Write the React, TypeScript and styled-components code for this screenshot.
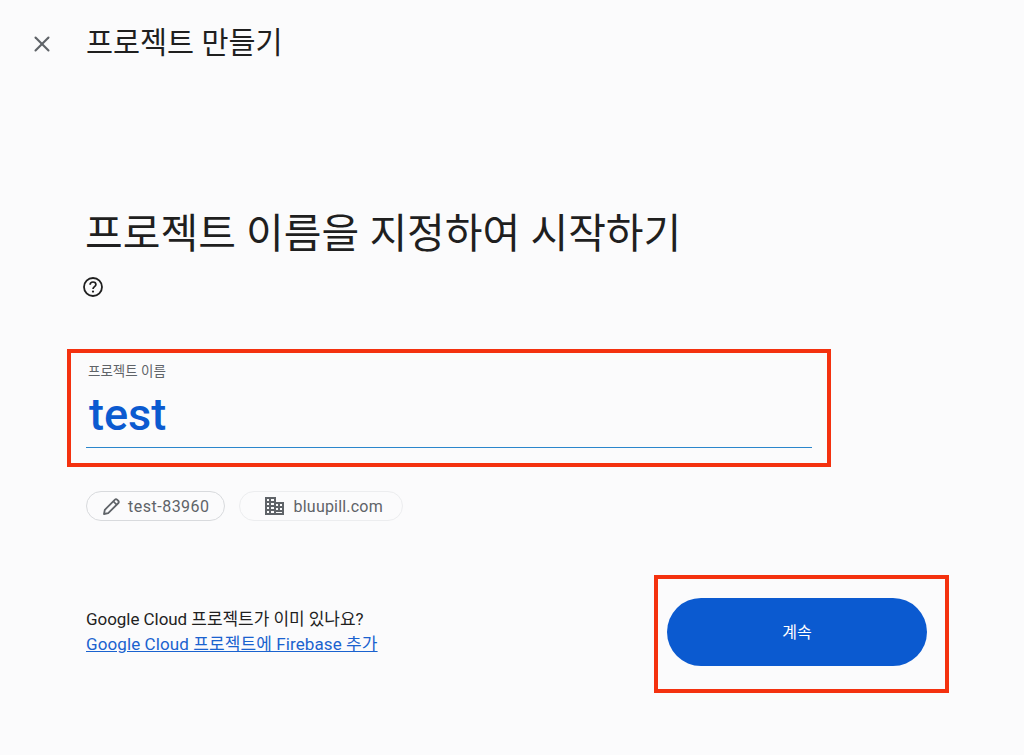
import styled, { createGlobalStyle } from "styled-components";
import { X } from "lucide-react";

const GlobalStyle = createGlobalStyle`
  html, body {
    margin: 0;
    height: 100%;
    background: #fbfbfc;
    font-family: Roboto, "Noto Sans CJK KR", sans-serif;
    color: #1f1f1f;
  }
`;

const QuestionIcon = () => (
  <svg width="22" height="22" viewBox="0 0 22 22" fill="none">
    <circle cx="11" cy="11" r="9" stroke="#1f1f1f" strokeWidth="1.8" />
    <path
      d="M8.1 8.8c0-1.6 1.3-2.8 2.9-2.8s2.9 1.1 2.9 2.6c0 2-2.9 2.2-2.9 4.4"
      stroke="#1f1f1f"
      strokeWidth="1.7"
    />
    <circle cx="11" cy="15.6" r="1.1" fill="#1f1f1f" />
  </svg>
);

const PencilIcon = () => (
  <svg width="19" height="19" viewBox="0 0 19 19" fill="none">
    <path
      d="M2 17l.8-4.2L13 2.6a1.4 1.4 0 0 1 2 0l1.4 1.4a1.4 1.4 0 0 1 0 2L6.2 16.2 2 17z"
      stroke="#5f6368"
      strokeWidth="1.8"
      strokeLinejoin="round"
    />
    <path d="M11.4 4.4l3.2 3.2" stroke="#5f6368" strokeWidth="1.5" />
  </svg>
);

const BuildingIcon = () => (
  <svg width="19" height="18" viewBox="0 0 19 18" fill="#5f6368">
    <path
      fillRule="evenodd"
      d="M0 0h11v5h8v13H0V0zm2 2v2h2V2H2zm4 0v2h3V2H6zM2 6v2h2V6H2zm4 0v2h3V6H6zM2 10v2h2v-2H2zm4 0v2h3v-2H6zM2 14v2h2v-2H2zm4 0v2h3v-2H6zm5-7v2h2V7h-2zm0 4v2h2v-2h-2zm0 4v1h6V7h-2v2h2v2h-2v2h2v2h-6z"
    />
  </svg>
);

export default function App() {
  return (
    <>
      <GlobalStyle />
      <Page>
        <Header>
          <CloseButton aria-label="닫기">
            <X size={34} strokeWidth={1.9} color="#5f6368" />
          </CloseButton>
          <HeaderTitle>프로젝트 만들기</HeaderTitle>
        </Header>
        <Main>
          <Heading>프로젝트 이름을 지정하여 시작하기</Heading>
          <HelpIcon>
            <QuestionIcon />
          </HelpIcon>
          <HighlightField>
            <FieldLabel>프로젝트 이름</FieldLabel>
            <FieldValue>test</FieldValue>
          </HighlightField>
          <Chips>
            <EditChip>
              <PencilIcon />
              test-83960
            </EditChip>
            <OrgChip>
              <BuildingIcon />
              bluupill.com
            </OrgChip>
          </Chips>
          <Footer>
            <ExistingProject>
              <ExistingText>Google Cloud 프로젝트가 이미 있나요?</ExistingText>
              <AddLink href="#">Google Cloud 프로젝트에 Firebase 추가</AddLink>
            </ExistingProject>
            <HighlightAction>
              <ContinueButton>계속</ContinueButton>
            </HighlightAction>
          </Footer>
        </Main>
      </Page>
    </>
  );
}

const Page = styled.div`
  width: 1024px;
  height: 755px;
  overflow: hidden;
`;

const Header = styled.header`
  display: flex;
  align-items: center;
  height: 88px;
  padding-left: 29px;
`;

const CloseButton = styled.button`
  display: flex;
  align-items: center;
  justify-content: center;
  width: 26px;
  height: 26px;
  margin-right: 31px;
  padding: 0;
  border: 0;
  background: none;
`;

const HeaderTitle = styled.h1`
  margin: 0 0 3px;
  font-size: 29.4px;
  font-weight: 400;
  line-height: 36px;
`;

const Main = styled.main`
  padding: 120px 0 0 86px;
`;

const Heading = styled.h2`
  margin: 0 0 0 -1px;
  font-size: 41px;
  font-weight: 400;
  line-height: 52px;
`;

const HelpIcon = styled.div`
  display: flex;
  margin: 16px 0 0 -4px;
`;

const HighlightField = styled.div`
  box-sizing: border-box;
  width: 764px;
  height: 118px;
  margin: 51px 0 0 -19px;
  padding: 10px 15px 15px 15px;
  border: 4px solid #f4310f;
  display: flex;
  flex-direction: column;
`;

const FieldLabel = styled.label`
  padding-left: 2px;
  font-size: 13.5px;
  line-height: 16px;
  color: #5f6368;
`;

const FieldValue = styled.div`
  flex: 1;
  padding: 10px 0 0 3px;
  border-bottom: 1px solid #2b86cc;
  font-size: 45px;
  font-weight: 500;
  line-height: 52px;
  color: #0b5ad0;
`;

const Chips = styled.div`
  display: flex;
  gap: 14px;
  margin-top: 24px;
`;

const Chip = styled.div`
  box-sizing: border-box;
  display: flex;
  align-items: center;
  height: 30px;
  border-radius: 15px;
  font-size: 16px;
  color: #5f6368;
`;

const EditChip = styled(Chip)`
  gap: 7px;
  padding: 0 14px 0 15px;
  border: 1px solid #d8dadd;
  letter-spacing: 0.5px;
`;

const OrgChip = styled(Chip)`
  gap: 10px;
  padding: 0 19px 0 25px;
  border: 1px solid #ecedef;
  letter-spacing: 0.2px;
`;

const Footer = styled.div`
  display: flex;
  justify-content: space-between;
  align-items: center;
  width: 863px;
  margin-top: 54px;
`;

const ExistingProject = styled.div`
  display: flex;
  flex-direction: column;
  margin-bottom: 4px;
`;

const ExistingText = styled.span`
  font-size: 17px;
  line-height: 25px;
  letter-spacing: -0.05px;
`;

const AddLink = styled.a`
  font-size: 17px;
  line-height: 25px;
  letter-spacing: 0.1px;
  color: #1a62cf;
`;

const HighlightAction = styled.div`
  box-sizing: border-box;
  width: 295px;
  height: 118px;
  padding: 19px 9px;
  border: 4px solid #f4310f;
`;

const ContinueButton = styled.button`
  display: block;
  width: 260px;
  height: 68px;
  padding: 0 0 2px;
  border: 0;
  border-radius: 34px;
  background: #0b5ad0;
  color: #ffffff;
  font-family: inherit;
  font-size: 16px;
`;
